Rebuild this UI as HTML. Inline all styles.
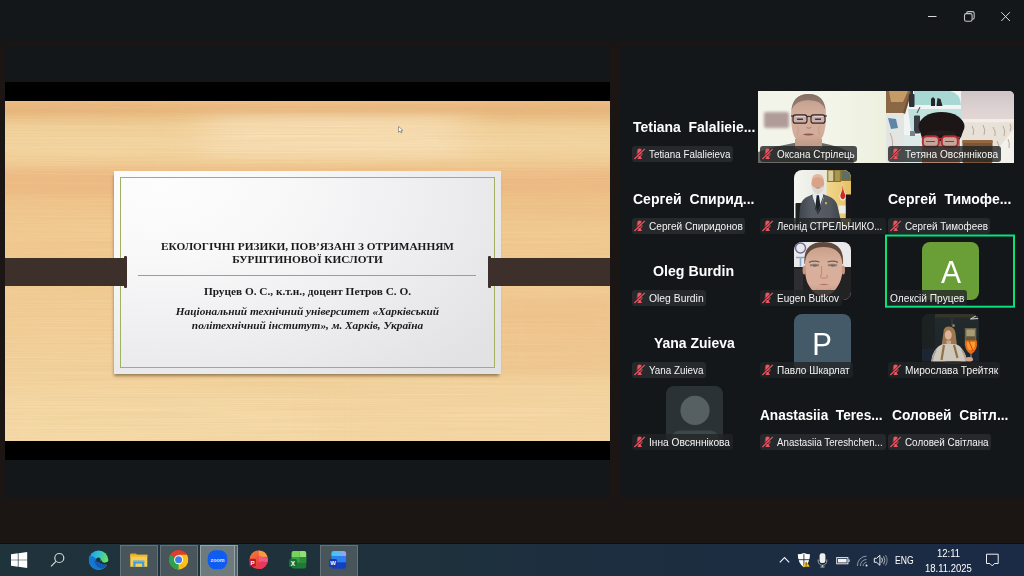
<!DOCTYPE html>
<html>
<head>
<meta charset="utf-8">
<style>
*{margin:0;padding:0;box-sizing:border-box}
html,body{width:1024px;height:576px;overflow:hidden;background:#1b1613;font-family:"Liberation Sans",sans-serif}
.abs{position:absolute}
#topbar{left:0;top:0;width:1024px;height:42px;background:#13171a}
#leftp{left:5px;top:45px;width:605px;height:453px;background:#13171a}
#rightp{left:619px;top:45px;width:405px;height:453px;background:#13171a}
#blk{left:5px;top:82px;width:605px;height:378px;background:#000}
#wood{left:5px;top:101px;width:605px;height:340px;overflow:hidden;background:#f2cc94}
.rib{background:#3d302a;height:28px;top:157px}
.cap{background:#3d302a;width:3px;height:32px;top:155px;border-radius:1px}
#paper{left:109px;top:70px;width:387px;height:203px;background:radial-gradient(ellipse 110% 120% at 12% 8%,#fdfdfd 0%,#f8f8f9 30%,#efeff1 60%,#e7e7e9 85%,#e2e2e4 100%);box-shadow:-1px 3px 3px -1px rgba(60,40,10,.5)}
#gb{left:6px;top:6px;width:375px;height:191px;border:1px solid #a0b162}
.st{font-family:"Liberation Serif",serif;color:#1a1a1a;text-align:center;white-space:nowrap;position:absolute;left:0;width:387px}
.tile{position:absolute;width:128px;height:72px}
.big{position:absolute;top:26px;height:20px;line-height:20px;color:#fff;font-weight:bold;font-size:14px;white-space:pre;transform-origin:0 50%}
.pill{position:absolute;left:2px;top:55px;height:16px;border-radius:3px;background:#25292c}
.pill.v{background:rgba(34,36,38,.80)}
.pill svg{position:absolute;left:1px;top:1px}
.pt{position:absolute;top:0.4px;height:16px;line-height:16px;color:#f4f4f4;font-size:10.7px;white-space:pre;transform-origin:0 50%}
.av{position:absolute;left:35.5px;top:7.4px;width:57.7px;height:57.7px;border-radius:8px;overflow:hidden}
.ltr{color:#fff;font-size:32px;line-height:58px;text-align:center;width:58px;position:absolute;left:0;top:0.5px}
#tb{left:0;top:543px;width:1024px;height:33px;background:linear-gradient(90deg,#1f333b 0%,#1e313c 40%,#1c2d41 70%,#1b2a45 100%);border-top:1px solid #0c0e10}
.tbb{position:absolute;top:1px;height:31px;width:38px;background:#48555a;border:1px solid #65727a;border-bottom:0}
.tray{color:#fff;position:absolute;white-space:pre;transform-origin:0 50%}
</style>
</head>
<body>
<div id="topbar" class="abs"></div>
<svg class="abs" style="left:920px;top:6px" width="100" height="22" viewBox="0 0 100 22">
  <path d="M8 10.5h8.5" stroke="#d8d8d8" stroke-width="1" fill="none"/>
  <rect x="46.6" y="5.6" width="7.6" height="7.6" rx="1.8" stroke="#c4c4c4" stroke-width="1.1" fill="none"/>
  <rect x="44.5" y="7.6" width="7.6" height="7.6" rx="1.8" stroke="#c4c4c4" stroke-width="1.1" fill="#13171a"/>
  <path d="M81.3 6.2l8.6 8.8M89.9 6.2l-8.6 8.8" stroke="#d8d8d8" stroke-width="1" fill="none"/>
</svg>
<div id="leftp" class="abs"></div>
<div id="rightp" class="abs"></div>
<div id="blk" class="abs"></div>
<div id="wood" class="abs">
  <svg class="abs" style="left:0;top:0" width="605" height="340" viewBox="0 0 605 340">
  <defs>
   <linearGradient id="wd" x1="0" y1="0" x2="0" y2="1">
    <stop offset="0" stop-color="#f2c38c"/><stop offset=".012" stop-color="#ecbc84"/><stop offset=".03" stop-color="#e9b980"/><stop offset=".048" stop-color="#ecc58c"/>
    <stop offset=".075" stop-color="#f3d29c"/><stop offset=".13" stop-color="#f5d7a4"/><stop offset=".19" stop-color="#f3cf98"/><stop offset=".24" stop-color="#f1c990"/>
    <stop offset=".30" stop-color="#f1c88f"/><stop offset=".38" stop-color="#f2cc94"/><stop offset=".46" stop-color="#f2cb92"/><stop offset=".55" stop-color="#f3ce96"/>
    <stop offset=".68" stop-color="#f3d09a"/><stop offset=".80" stop-color="#f4d49f"/><stop offset=".90" stop-color="#f5d8a5"/><stop offset="1" stop-color="#f5d9a7"/>
   </linearGradient>
   <filter id="wb" x="-20%" y="-20%" width="140%" height="140%"><feGaussianBlur stdDeviation="22 5"/></filter>
   <filter id="gr" x="0" y="0" width="100%" height="100%"><feTurbulence type="fractalNoise" baseFrequency="0.005 0.8" numOctaves="2" seed="7"/><feColorMatrix type="matrix" values="0 0 0 0 0.62  0 0 0 0 0.36  0 0 0 0 0.12  0.9 0.9 0 0 -0.62"/></filter>
  </defs>
  <rect width="605" height="340" fill="url(#wd)"/>
  <g filter="url(#wb)">
   <rect x="-60" y="67" width="730" height="28" fill="#eeb280" opacity=".5"/>
   <rect x="480" y="103" width="170" height="14" fill="#ecb07c" opacity=".22"/>
   <rect x="480" y="-5" width="160" height="26" fill="#e8b07a" opacity=".22"/>
   <rect x="-40" y="-5" width="170" height="16" fill="#e5ad76" opacity=".15"/>
   <rect x="470" y="195" width="170" height="80" fill="#ecb67e" opacity=".32"/>
   <rect x="200" y="14" width="260" height="42" fill="#fbe8c4" opacity=".55"/>
   <rect x="-30" y="290" width="330" height="55" fill="#f9e2b4" opacity=".28"/>
  </g>
  <rect width="605" height="340" filter="url(#gr)" opacity=".22"/>
  </svg>
  <div id="paper" class="abs">
    <div id="gb" class="abs"></div>
    <div class="st" id="t1" style="top:69px;font-weight:bold;font-size:11.3px;line-height:13.3px">ЕКОЛОГІЧНІ РИЗИКИ, ПОВ’ЯЗАНІ З ОТРИМАННЯМ<br>БУРШТИНОВОЇ КИСЛОТИ</div>
    <div class="abs" style="left:24px;top:104px;width:338px;height:1px;background:#9aab58"></div>
    <div class="st" id="t2" style="top:114.3px;font-weight:bold;font-size:11.3px;line-height:13px">Пруцев О. С., к.т.н., доцент Петров С. О.</div>
    <div class="st" id="t3" style="top:134px;font-weight:bold;font-style:italic;font-size:11.3px;line-height:13.7px">Національний технічний університет «Харківський<br>політехнічний інститут», м. Харків, Україна</div>
  </div>
  <div class="abs rib" style="left:0;width:121px"></div>
  <div class="abs cap" style="left:119px"></div>
  <div class="abs rib" style="left:484px;width:121px"></div>
  <div class="abs cap" style="left:483px"></div>
  <svg class="abs" style="left:393px;top:25px" width="6" height="8" viewBox="0 0 6 8"><path d="M0.5 0.3v6l1.5-1.3 1.1 2 .9-.5-1-1.9h1.9z" fill="#fff" stroke="#555" stroke-width=".55"/></svg>
</div>
<div class="tile" style="left:630px;top:91px"><div class="big" id="b0" style="left:2.90px;transform:scaleX(0.9968)">Tetiana  Falalieie...</div><div class="pill" style="left:2.0px;width:101.0px"><svg width="14" height="14" viewBox="0 0 14 14"><rect x="4.3" y="1.5" width="4.6" height="6.6" rx="2.3" fill="#f0545e"/><path d="M3.9 6.6a2.7 2.7 0 0 0 5.4 0" stroke="#f0545e" stroke-width="1" fill="none" opacity=".75"/><path d="M6.6 9v2.2" stroke="#f0545e" stroke-width="2.4" fill="none"/><path d="M4.7 11.3h3.9" stroke="#f0545e" stroke-width="1.4" fill="none"/><path d="M1.6 11.6L11.7 1.6" stroke="#25292c" stroke-width="2.2" opacity=".8"/><path d="M1.4 12L11.8 1.8" stroke="#f0545e" stroke-width="1.1"/></svg><div class="pt" id="p0" style="left:16.90px;transform:scaleX(0.9194)">Tetiana Falalieieva</div></div></div>
<div class="tile" style="left:758px;top:91px"><svg class="abs" style="left:0;top:0" width="128" height="72" viewBox="0 0 128 72">
<defs><filter id="bl1" x="-20%" y="-20%" width="140%" height="140%"><feGaussianBlur stdDeviation="1.6"/></filter><filter id="bl1s"><feGaussianBlur stdDeviation=".45"/></filter>
<linearGradient id="w1" x1="0" x2="1"><stop offset="0" stop-color="#f2f4ea"/><stop offset=".5" stop-color="#f3f5ea"/><stop offset="1" stop-color="#edf0de"/></linearGradient>
<linearGradient id="f1" x1="0" x2="0" y1="0" y2="1"><stop offset="0" stop-color="#9a8577"/><stop offset=".16" stop-color="#c7a492"/><stop offset=".35" stop-color="#d2ad9b"/><stop offset=".75" stop-color="#d4ae9c"/><stop offset="1" stop-color="#c19886"/></linearGradient></defs>
<rect width="128" height="72" fill="url(#w1)"/>
<rect x="6" y="21" width="25" height="16" rx="2" fill="#a08684" opacity=".8" filter="url(#bl1)"/>
<g filter="url(#bl1s)">
<path d="M0 72v-11q18-6 36-9h28q16 3 28 9l4 11z" fill="#696a66"/>
<path d="M37 48h27v9q-13 6-27 0z" fill="#c39c8a"/>
<path d="M33 24q0-21 17.500-21t17.500 21q0 14-3 21-5 10-14.500 10t-14.500-10q-3-7-3-21z" fill="url(#f1)"/>
<path d="M33.500 19q1-15.500 17-16 16 .5 17 16-4-10-17-10t-17 10z" fill="#7a675b" opacity=".7"/>
<rect x="35" y="23.800" width="14" height="8.400" rx="2.500" fill="#c9b0aa" stroke="#3a2422" stroke-width="1.150"/>
<rect x="53" y="23.800" width="14" height="8.400" rx="2.500" fill="#c9b0aa" stroke="#3a2422" stroke-width="1.150"/>
<path d="M33 25h3M49 26q2-1.500 4 0M66 25h3" stroke="#3a2422" stroke-width="1.150" fill="none"/>
<path d="M38 25.500h9M56 25.500h9" stroke="#dfe0ee" stroke-width="1.200" opacity=".7"/>
<path d="M44.500 43.300q6-1.800 12 0q-6 2.400-12 0z" fill="#8d5552"/><path d="M39 28.300h6M57 28.300h6" stroke="#4a3632" stroke-width="1.400"/>
<path d="M48.500 36.500q2.200 1.500 4.800 0" stroke="#a57c6c" stroke-width="1" fill="none"/>
<path d="M39 35q3 4 0 9M62 35q-3 4 0 9" stroke="#c49a8a" stroke-width="1.500" fill="none" opacity=".6"/>
</g>
</svg>
<div class="pill v" style="left:2.0px;width:97.3px"><svg width="14" height="14" viewBox="0 0 14 14"><rect x="4.3" y="1.5" width="4.6" height="6.6" rx="2.3" fill="#f0545e"/><path d="M3.9 6.6a2.7 2.7 0 0 0 5.4 0" stroke="#f0545e" stroke-width="1" fill="none" opacity=".75"/><path d="M6.6 9v2.2" stroke="#f0545e" stroke-width="2.4" fill="none"/><path d="M4.7 11.3h3.9" stroke="#f0545e" stroke-width="1.4" fill="none"/><path d="M1.6 11.6L11.7 1.6" stroke="#25292c" stroke-width="2.2" opacity=".8"/><path d="M1.4 12L11.8 1.8" stroke="#f0545e" stroke-width="1.1"/></svg><div class="pt" id="p1" style="left:16.90px;transform:scaleX(0.9248)">Оксана Стрілець</div></div></div>
<div class="tile" style="left:886px;top:91px"><svg class="abs" style="left:0;top:0;border-top-right-radius:5px" width="128" height="72" viewBox="0 0 128 72">
<defs><filter id="bl2"><feGaussianBlur stdDeviation=".6"/></filter>
<linearGradient id="wl2" x1="0" x2="0" y1="0" y2="1"><stop offset="0" stop-color="#cfc5c6"/><stop offset=".5" stop-color="#dbd0d0"/><stop offset="1" stop-color="#e4d8d6"/></linearGradient></defs>
<rect width="128" height="72" fill="#e6e1da"/>
<rect x="74" y="0" width="54" height="30" fill="url(#wl2)"/>
<rect x="74" y="28" width="54" height="3.500" fill="#f1eeea"/>
<rect x="74" y="31.500" width="54" height="41" fill="#e7e1d8"/><path d="M100 72l28-34v34z" fill="#f6f5f2" opacity=".8" filter="url(#bl2)"/>
<g stroke="#b49e8a" stroke-width="1" fill="none" opacity=".85"><path d="M86 35q3 4 1 9M97 34q3 5 1 10M107 36q3 4 2 9M117 35q3 5 1 10M91 50q3 4 1 9M111 50q3 4 1 9M122 48q2 4 1 9M124 33q2 3 0 7"/></g>
<g filter="url(#bl2)">
<rect x="17" y="0" width="58" height="60" fill="#f1f4f2"/>
<path d="M28 0h36q10 2 11 14h-47z" fill="#a8d8d4"/>
<path d="M22 18h53v22h-50z" fill="#bfe2de"/>
<path d="M17 44h40v28h-40z" fill="#dcebe8"/>
<rect x="0" y="22" width="18" height="50" fill="#e3e5e2"/>
<path d="M2 27l8 1 2 9-7 1z" fill="#5f86a8"/><path d="M4 42q4 8 2 20" stroke="#c0a8a0" stroke-width="1" fill="none"/>
<path d="M0 0h25l-7 22h-18z" fill="#8b6844"/>
<path d="M3 0h19l-5 11h-12z" fill="#c59b66"/>
<path d="M17 22l7-22 2 0-7 23z" fill="#6d4f30"/>
<rect x="23" y="3" width="5.500" height="13" rx="1" fill="#2d3137"/><rect x="24.500" y="0" width="2.500" height="4" fill="#2d3137"/>
<path d="M45 15v-7l2-2 2 2v7zM50.500 15l1-8 3 1 2 7z" fill="#26282c"/>
<path d="M31 22l3-6M28.500 25h5v17h-5z" stroke="#3b3d44" stroke-width="1" fill="#3b3d44"/>
<rect x="24" y="40" width="5" height="5" fill="#7a8288"/>
<rect x="76.500" y="49" width="30" height="23" rx="1.500" fill="#7c5538"/><rect x="76.500" y="49" width="30" height="3" fill="#94683f"/>
<path d="M36 72v-22q0-5 5-5h28q5 0 5 5v22z" fill="#b88a78"/>
<ellipse cx="55.500" cy="35.500" rx="23" ry="14.500" fill="#1c1719"/>
<path d="M33.500 37q1.500 10 4.500 12l3-7q14-4 29 0l3 7q3-3 4.500-12z" fill="#1a1618"/>
<path d="M41 41q14-4 28 0l1 3h-30z" fill="#221a1b"/>
<rect x="36.800" y="45.300" width="16" height="10.500" rx="4" fill="#c6a59b" stroke="#b42a32" stroke-width="1.900"/>
<rect x="55.800" y="45.300" width="16" height="10.500" rx="4" fill="#c6a59b" stroke="#b42a32" stroke-width="1.900"/>
<path d="M35.500 46.500h2M71.500 46.500h2.500M52.500 48q1.700-1 3.400 0" stroke="#b42a32" stroke-width="1.600" fill="none"/>
<path d="M40 50.500h9M59 50.500h9" stroke="#6a4a48" stroke-width="1.200"/>
<path d="M36 72v-6h36v6z" fill="#b08270"/>
</g>
</svg>
<div class="pill v" style="left:2.0px;width:113.0px"><svg width="14" height="14" viewBox="0 0 14 14"><rect x="4.3" y="1.5" width="4.6" height="6.6" rx="2.3" fill="#f0545e"/><path d="M3.9 6.6a2.7 2.7 0 0 0 5.4 0" stroke="#f0545e" stroke-width="1" fill="none" opacity=".75"/><path d="M6.6 9v2.2" stroke="#f0545e" stroke-width="2.4" fill="none"/><path d="M4.7 11.3h3.9" stroke="#f0545e" stroke-width="1.4" fill="none"/><path d="M1.6 11.6L11.7 1.6" stroke="#25292c" stroke-width="2.2" opacity=".8"/><path d="M1.4 12L11.8 1.8" stroke="#f0545e" stroke-width="1.1"/></svg><div class="pt" id="p2" style="left:16.90px;transform:scaleX(0.9458)">Тетяна Овсяннікова</div></div></div>
<div class="tile" style="left:630px;top:163px"><div class="big" id="b3" style="left:3.00px;transform:scaleX(1.0013)">Сергей  Спирид...</div><div class="pill" style="left:2.0px;width:113.3px"><svg width="14" height="14" viewBox="0 0 14 14"><rect x="4.3" y="1.5" width="4.6" height="6.6" rx="2.3" fill="#f0545e"/><path d="M3.9 6.6a2.7 2.7 0 0 0 5.4 0" stroke="#f0545e" stroke-width="1" fill="none" opacity=".75"/><path d="M6.6 9v2.2" stroke="#f0545e" stroke-width="2.4" fill="none"/><path d="M4.7 11.3h3.9" stroke="#f0545e" stroke-width="1.4" fill="none"/><path d="M1.6 11.6L11.7 1.6" stroke="#25292c" stroke-width="2.2" opacity=".8"/><path d="M1.4 12L11.8 1.8" stroke="#f0545e" stroke-width="1.1"/></svg><div class="pt" id="p3" style="left:16.90px;transform:scaleX(0.9451)">Сергей Спиридонов</div></div></div>
<div class="tile" style="left:758px;top:163px"><div class="av"><svg width="58" height="58" viewBox="0 0 58 58">
<defs><filter id="bl3"><feGaussianBlur stdDeviation=".5"/></filter>
<linearGradient id="bd3" x1="0" x2="1"><stop offset="0" stop-color="#f6f6f1"/><stop offset=".5" stop-color="#e6e8e0"/><stop offset="1" stop-color="#eeeee8"/></linearGradient>
<linearGradient id="su3" x1="0" x2="1"><stop offset="0" stop-color="#3f444b"/><stop offset=".3" stop-color="#585d65"/><stop offset=".7" stop-color="#535860"/><stop offset="1" stop-color="#3d4249"/></linearGradient>
<linearGradient id="yl3" x1="0" x2="1"><stop offset="0" stop-color="#f0d88e"/><stop offset="1" stop-color="#e4bf62"/></linearGradient></defs>
<rect width="58" height="58" fill="url(#bd3)"/>
<rect x="32.500" y="0" width="26" height="58" fill="url(#yl3)"/>
<g filter="url(#bl3)">
<rect x="33.800" y="0" width="5.900" height="11.500" fill="#d6cca0" stroke="#86702c" stroke-width="1"/>
<rect x="40.500" y="0" width="5.900" height="11.500" fill="#a89654" stroke="#86702c" stroke-width="1"/>
<rect x="47.600" y="0" width="9.400" height="10.500" fill="#5e6e62" stroke="#86702c" stroke-width="1"/>
<path d="M48.800 13.300l.8 6 2.400 5.500q.8 5-3.200 6-4-1-3.200-6l2.400-5.500z" fill="#f2ece4"/>
<path d="M48.800 15l.6 5 1.800 5q.4 3.500-2.400 4.200-2.800-.7-2.400-4.200l1.800-5z" fill="#cc2a20"/>
<rect x="44.500" y="35.500" width="8" height="8" fill="#ecece8"/>
<rect x="51.800" y="24.500" width="6.500" height="24" fill="#15161a"/>
<rect x="1.500" y="33" width="6" height="25" rx="1" fill="#1b2024"/>
<path d="M4.500 58l1.500-21q1-8 9-11l6-2.500h6l7 2.500q8 3 9.500 10l5 22z" fill="url(#su3)"/>
<path d="M19.500 22l4.200 1.500 4.200-1.500 2 5.500-6 15-6-15z" fill="#e6ebf0"/>
<path d="M22.700 25.200h2.200l2 13.500-3 5.500-2.800-5.500z" fill="#1c2026"/>
<path d="M17.500 25l6 17.500M30 25l-6 17.500" stroke="#42474e" stroke-width="1" fill="none"/>
<ellipse cx="23.800" cy="13.400" rx="6.400" ry="8.800" fill="#d9a38a"/>
<path d="M17.500 10q1-6 6.300-6t6.300 6q-3-3-6.300-3t-6.300 3z" fill="#e4b8a0"/>
<path d="M17.800 15q.3 8.500 6 9 5.700-.5 6-9-2.500 3.300-6 3.300t-6-3.300z" fill="#dcd8d4"/>
<path d="M21.500 17.800q2.300 1 4.600 0" stroke="#b88474" stroke-width=".8" fill="none"/>
<rect x="31" y="32" width="2" height="2.200" fill="#c8b040"/>
</g></svg></div>
<div class="pill v" style="left:2.0px;width:126.0px"><svg width="14" height="14" viewBox="0 0 14 14"><rect x="4.3" y="1.5" width="4.6" height="6.6" rx="2.3" fill="#f0545e"/><path d="M3.9 6.6a2.7 2.7 0 0 0 5.4 0" stroke="#f0545e" stroke-width="1" fill="none" opacity=".75"/><path d="M6.6 9v2.2" stroke="#f0545e" stroke-width="2.4" fill="none"/><path d="M4.7 11.3h3.9" stroke="#f0545e" stroke-width="1.4" fill="none"/><path d="M1.6 11.6L11.7 1.6" stroke="#25292c" stroke-width="2.2" opacity=".8"/><path d="M1.4 12L11.8 1.8" stroke="#f0545e" stroke-width="1.1"/></svg><div class="pt" id="p4" style="left:16.90px;transform:scaleX(0.8969)">Леонід СТРЕЛЬНИКО...</div></div></div>
<div class="tile" style="left:886px;top:163px"><div class="big" id="b5" style="left:2.15px;transform:scaleX(1.0002)">Сергей  Тимофе...</div><div class="pill" style="left:2.0px;width:101.7px"><svg width="14" height="14" viewBox="0 0 14 14"><rect x="4.3" y="1.5" width="4.6" height="6.6" rx="2.3" fill="#f0545e"/><path d="M3.9 6.6a2.7 2.7 0 0 0 5.4 0" stroke="#f0545e" stroke-width="1" fill="none" opacity=".75"/><path d="M6.6 9v2.2" stroke="#f0545e" stroke-width="2.4" fill="none"/><path d="M4.7 11.3h3.9" stroke="#f0545e" stroke-width="1.4" fill="none"/><path d="M1.6 11.6L11.7 1.6" stroke="#25292c" stroke-width="2.2" opacity=".8"/><path d="M1.4 12L11.8 1.8" stroke="#f0545e" stroke-width="1.1"/></svg><div class="pt" id="p5" style="left:16.90px;transform:scaleX(0.9227)">Сергей Тимофеев</div></div></div>
<div class="tile" style="left:630px;top:235px"><div class="big" id="b6" style="left:23.30px;transform:scaleX(1.0122)">Oleg Burdin</div><div class="pill" style="left:2.0px;width:74.0px"><svg width="14" height="14" viewBox="0 0 14 14"><rect x="4.3" y="1.5" width="4.6" height="6.6" rx="2.3" fill="#f0545e"/><path d="M3.9 6.6a2.7 2.7 0 0 0 5.4 0" stroke="#f0545e" stroke-width="1" fill="none" opacity=".75"/><path d="M6.6 9v2.2" stroke="#f0545e" stroke-width="2.4" fill="none"/><path d="M4.7 11.3h3.9" stroke="#f0545e" stroke-width="1.4" fill="none"/><path d="M1.6 11.6L11.7 1.6" stroke="#25292c" stroke-width="2.2" opacity=".8"/><path d="M1.4 12L11.8 1.8" stroke="#f0545e" stroke-width="1.1"/></svg><div class="pt" id="p6" style="left:16.90px;transform:scaleX(0.9689)">Oleg Burdin</div></div></div>
<div class="tile" style="left:758px;top:235px"><div class="av"><svg width="58" height="58" viewBox="0 0 58 58">
<defs><filter id="bl4"><feGaussianBlur stdDeviation=".7"/></filter>
<linearGradient id="f4" x1="0" x2="0" y1="0" y2="1"><stop offset="0" stop-color="#c9a08a"/><stop offset=".3" stop-color="#d7b09b"/><stop offset=".75" stop-color="#d9ae9a"/><stop offset="1" stop-color="#c39680"/></linearGradient></defs>
<rect width="58" height="58" fill="#e9e9ea"/>
<g filter="url(#bl4)">
<circle cx="6.500" cy="6" r="5" fill="none" stroke="#6a6a9e" stroke-width="1.400"/>
<path d="M2 15.500h9M6.500 15.500v9" stroke="#8aa4cc" stroke-width="1.600"/>
<path d="M0 58v-33h12q17-4 34 0h12v33z" fill="#222224"/>
<path d="M0 27h9v31h-9z" fill="#2e2e30"/>
<path d="M10.500 22q-2-22 19-22t19.500 22z" fill="#5e4a3c"/>
<path d="M11 26q-1.500-21 18.500-21t19 21q0 9-3 15-3.500 7-8 10.500-3.500 3-8 3t-8-3q-4.500-3.500-8-10.500-2.500-6-2.500-15z" fill="url(#f4)"/>
<ellipse cx="10.300" cy="28" rx="1.700" ry="4.500" fill="#c9977f"/><ellipse cx="49.300" cy="28" rx="1.700" ry="4.500" fill="#c9977f"/>
<path d="M15 20.300q5-2.200 10.500-.3M33.500 20q5.500-1.900 10.500.3" stroke="#7a5c4c" stroke-width="1.300" fill="none"/>
<path d="M16 23.500q4.500-1.500 9 0M34 23.500q4.500-1.500 9 0" stroke="#8e6c5e" stroke-width="2.200" fill="none" opacity=".8"/>
<ellipse cx="20.800" cy="23.800" rx="2.300" ry="1" fill="#5a7088"/><ellipse cx="38.800" cy="23.800" rx="2.300" ry="1" fill="#5a7088"/>
<path d="M27.500 24v9q-2 2 0 2.800 2.500 1 5 0 2-.8 0-2.800" stroke="#c08e7a" stroke-width="1.100" fill="none"/>
<path d="M24.500 42.300q5.500-1.300 11 0q-5.500 1.800-11 0z" fill="#b87870"/>
<path d="M22 47q7.500 3 15 0" stroke="#c79a86" stroke-width="1.500" fill="none" opacity=".7"/>
</g></svg></div>
<div class="pill v" style="left:2.0px;width:81.7px"><svg width="14" height="14" viewBox="0 0 14 14"><rect x="4.3" y="1.5" width="4.6" height="6.6" rx="2.3" fill="#f0545e"/><path d="M3.9 6.6a2.7 2.7 0 0 0 5.4 0" stroke="#f0545e" stroke-width="1" fill="none" opacity=".75"/><path d="M6.6 9v2.2" stroke="#f0545e" stroke-width="2.4" fill="none"/><path d="M4.7 11.3h3.9" stroke="#f0545e" stroke-width="1.4" fill="none"/><path d="M1.6 11.6L11.7 1.6" stroke="#25292c" stroke-width="2.2" opacity=".8"/><path d="M1.4 12L11.8 1.8" stroke="#f0545e" stroke-width="1.1"/></svg><div class="pt" id="p7" style="left:16.90px;transform:scaleX(0.9317)">Eugen Butkov</div></div></div>
<div class="tile" style="left:886px;top:235px"><div class="av" style="background:#6a9f38"><div class="ltr" style="transform:scaleX(.94)">A</div></div>
<div class="pill v" style="left:2.0px;width:79.2px"><div class="pt" id="p8" style="left:2.40px;transform:scaleX(0.9513)">Олексій Пруцев</div></div></div>
<div class="tile" style="left:630px;top:307px"><div class="big" id="b9" style="left:23.70px;transform:scaleX(0.9971)">Yana Zuieva</div><div class="pill" style="left:2.0px;width:74.0px"><svg width="14" height="14" viewBox="0 0 14 14"><rect x="4.3" y="1.5" width="4.6" height="6.6" rx="2.3" fill="#f0545e"/><path d="M3.9 6.6a2.7 2.7 0 0 0 5.4 0" stroke="#f0545e" stroke-width="1" fill="none" opacity=".75"/><path d="M6.6 9v2.2" stroke="#f0545e" stroke-width="2.4" fill="none"/><path d="M4.7 11.3h3.9" stroke="#f0545e" stroke-width="1.4" fill="none"/><path d="M1.6 11.6L11.7 1.6" stroke="#25292c" stroke-width="2.2" opacity=".8"/><path d="M1.4 12L11.8 1.8" stroke="#f0545e" stroke-width="1.1"/></svg><div class="pt" id="p9" style="left:16.90px;transform:scaleX(0.9195)">Yana Zuieva</div></div></div>
<div class="tile" style="left:758px;top:307px"><div class="av" style="background:#455a68"><div class="ltr" style="transform:scaleX(.92);left:-0.8px">P</div></div>
<div class="pill v" style="left:2.0px;width:92.6px"><svg width="14" height="14" viewBox="0 0 14 14"><rect x="4.3" y="1.5" width="4.6" height="6.6" rx="2.3" fill="#f0545e"/><path d="M3.9 6.6a2.7 2.7 0 0 0 5.4 0" stroke="#f0545e" stroke-width="1" fill="none" opacity=".75"/><path d="M6.6 9v2.2" stroke="#f0545e" stroke-width="2.4" fill="none"/><path d="M4.7 11.3h3.9" stroke="#f0545e" stroke-width="1.4" fill="none"/><path d="M1.6 11.6L11.7 1.6" stroke="#25292c" stroke-width="2.2" opacity=".8"/><path d="M1.4 12L11.8 1.8" stroke="#f0545e" stroke-width="1.1"/></svg><div class="pt" id="p10" style="left:16.90px;transform:scaleX(0.9392)">Павло Шкарлат</div></div></div>
<div class="tile" style="left:886px;top:307px"><div class="av"><svg width="58" height="58" viewBox="0 0 58 58">
<defs><filter id="bl5"><feGaussianBlur stdDeviation=".7"/></filter>
<linearGradient id="bg5" x1="0" x2="0" y1="0" y2="1"><stop offset="0" stop-color="#2a2b27"/><stop offset=".1" stop-color="#222a2d"/><stop offset=".7" stop-color="#1d2529"/><stop offset="1" stop-color="#1b1d1f"/></linearGradient></defs>
<rect width="58" height="58" fill="url(#bg5)"/>
<g filter="url(#bl5)">
<rect x="0" y="0" width="13" height="40" fill="#1a2024"/>
<rect x="13" y="0" width="45" height="3.500" fill="#36342b"/>
<path d="M48.500 5l6-3.500 2.500 3z" fill="none" stroke="#d8d8d2" stroke-width="1"/>
<rect x="42.800" y="14" width="11.500" height="17" fill="#6e6548"/><rect x="44.300" y="15.500" width="8.500" height="7" fill="#a89c74"/><rect x="44.300" y="22.500" width="8.500" height="7" fill="#62563a"/>
<path d="M30 5v7" stroke="#4a4c46" stroke-width=".8"/><circle cx="31.500" cy="11.500" r="1.500" fill="#7e7a64"/>
<rect x="0" y="35" width="58" height="12" fill="#1a2632"/>
<path d="M21.500 18q0-5.500 5.500-5.500t6.500 6.500l1.500 13 2.500 12h-6l-2-14h-5l-1.500 14h-6l2.500-12z" fill="#9c7850"/>
<ellipse cx="26.300" cy="21" rx="3.500" ry="4.700" fill="#dfb49c"/>
<path d="M24.500 26.500h4.500v4h-4.500z" fill="#cfa48c"/>
<path d="M9 49q1-10 5-14 4-5 9-5h8q6 0 9 5 4 5 5 12l-4 2z" fill="#cfc8bc"/>
<path d="M14 36q-3 5-4 12M40 36q3 5 4 11" stroke="#a8a094" stroke-width="1.500" fill="none"/>
<path d="M22 31l-2.500 15M32 31l3.500 13" stroke="#94704a" stroke-width="2.200"/>
<path d="M43.300 26.500h11.400q1.800 9-5.700 14-7.500-5-5.700-14z" fill="#ee6a12"/><path d="M45 28h8q.5 5-2 8h-4q-2.500-3-2-8z" fill="#ff9a2e"/><path d="M47 27l4 10" stroke="#c8440c" stroke-width="1"/>
<path d="M49 40.500v5" stroke="#c8c0b0" stroke-width=".8"/>
<ellipse cx="47" cy="45.500" rx="4" ry="2.400" fill="#d4a48c"/>
<rect x="0" y="47.500" width="58" height="11" fill="#191919"/>
<ellipse cx="31" cy="48.500" rx="9" ry="1.600" fill="#4e4832"/>
</g></svg></div>
<div class="pill v" style="left:2.0px;width:112.3px"><svg width="14" height="14" viewBox="0 0 14 14"><rect x="4.3" y="1.5" width="4.6" height="6.6" rx="2.3" fill="#f0545e"/><path d="M3.9 6.6a2.7 2.7 0 0 0 5.4 0" stroke="#f0545e" stroke-width="1" fill="none" opacity=".75"/><path d="M6.6 9v2.2" stroke="#f0545e" stroke-width="2.4" fill="none"/><path d="M4.7 11.3h3.9" stroke="#f0545e" stroke-width="1.4" fill="none"/><path d="M1.6 11.6L11.7 1.6" stroke="#25292c" stroke-width="2.2" opacity=".8"/><path d="M1.4 12L11.8 1.8" stroke="#f0545e" stroke-width="1.1"/></svg><div class="pt" id="p11" style="left:16.90px;transform:scaleX(0.9509)">Мирослава Трейтяк</div></div></div>
<div class="tile" style="left:630px;top:379px"><div class="av" style="background:#2a3235"><svg width="58" height="58" viewBox="0 0 58 58"><circle cx="29" cy="24.4" r="14.6" fill="#565f62"/><path d="M4.5 58v-4a9.5 9.5 0 0 1 9.5-9.5h30a9.5 9.5 0 0 1 9.5 9.5v4z" fill="#3d4649"/></svg></div>
<div class="pill v" style="left:2.0px;width:101.0px"><svg width="14" height="14" viewBox="0 0 14 14"><rect x="4.3" y="1.5" width="4.6" height="6.6" rx="2.3" fill="#f0545e"/><path d="M3.9 6.6a2.7 2.7 0 0 0 5.4 0" stroke="#f0545e" stroke-width="1" fill="none" opacity=".75"/><path d="M6.6 9v2.2" stroke="#f0545e" stroke-width="2.4" fill="none"/><path d="M4.7 11.3h3.9" stroke="#f0545e" stroke-width="1.4" fill="none"/><path d="M1.6 11.6L11.7 1.6" stroke="#25292c" stroke-width="2.2" opacity=".8"/><path d="M1.4 12L11.8 1.8" stroke="#f0545e" stroke-width="1.1"/></svg><div class="pt" id="p12" style="left:16.90px;transform:scaleX(0.9517)">Інна Овсяннікова</div></div></div>
<div class="tile" style="left:758px;top:379px"><div class="big" id="b13" style="left:2.40px;transform:scaleX(0.9745)">Anastasiia  Teres...</div><div class="pill" style="left:2.0px;width:126.0px"><svg width="14" height="14" viewBox="0 0 14 14"><rect x="4.3" y="1.5" width="4.6" height="6.6" rx="2.3" fill="#f0545e"/><path d="M3.9 6.6a2.7 2.7 0 0 0 5.4 0" stroke="#f0545e" stroke-width="1" fill="none" opacity=".75"/><path d="M6.6 9v2.2" stroke="#f0545e" stroke-width="2.4" fill="none"/><path d="M4.7 11.3h3.9" stroke="#f0545e" stroke-width="1.4" fill="none"/><path d="M1.6 11.6L11.7 1.6" stroke="#25292c" stroke-width="2.2" opacity=".8"/><path d="M1.4 12L11.8 1.8" stroke="#f0545e" stroke-width="1.1"/></svg><div class="pt" id="p13" style="left:16.90px;transform:scaleX(0.9092)">Anastasiia Tereshchen...</div></div></div>
<div class="tile" style="left:886px;top:379px"><div class="big" id="b14" style="left:5.80px;transform:scaleX(0.9863)">Соловей  Світл...</div><div class="pill" style="left:2.0px;width:103.0px"><svg width="14" height="14" viewBox="0 0 14 14"><rect x="4.3" y="1.5" width="4.6" height="6.6" rx="2.3" fill="#f0545e"/><path d="M3.9 6.6a2.7 2.7 0 0 0 5.4 0" stroke="#f0545e" stroke-width="1" fill="none" opacity=".75"/><path d="M6.6 9v2.2" stroke="#f0545e" stroke-width="2.4" fill="none"/><path d="M4.7 11.3h3.9" stroke="#f0545e" stroke-width="1.4" fill="none"/><path d="M1.6 11.6L11.7 1.6" stroke="#25292c" stroke-width="2.2" opacity=".8"/><path d="M1.4 12L11.8 1.8" stroke="#f0545e" stroke-width="1.1"/></svg><div class="pt" id="p14" style="left:16.90px;transform:scaleX(0.9225)">Соловей Світлана</div></div></div>
<svg class="abs" style="left:880px;top:230px" width="140" height="82" viewBox="0 0 140 82"><rect x="6" y="5.5" width="128" height="71.2" fill="none" stroke="#08e27c" stroke-width="2"/></svg>
<div id="tb" class="abs">
<div class="tbb" style="left:120px"></div>
<div class="tbb" style="left:160px"></div>
<div class="tbb" style="left:200px;width:35px;background:#6e7b7e;border-color:#98a4a6"></div>
<div class="abs" style="left:235px;top:1px;width:3px;height:31px;background:#56646a;border-right:1px solid #8a9699;border-top:1px solid #8a9699"></div>
<div class="tbb" style="left:320px"></div>
<svg class="abs" style="left:0;top:0" width="420" height="32" viewBox="0 0 420 32">
<defs>
<linearGradient id="eg" x1="0" y1="0.2" x2="1" y2="0.5"><stop offset="0" stop-color="#1e9be6"/><stop offset=".4" stop-color="#2cbcd8"/><stop offset=".75" stop-color="#4fd58a"/><stop offset="1" stop-color="#74e650"/></linearGradient>
<linearGradient id="pg" x1="0" y1="0" x2="1" y2="1"><stop offset="0" stop-color="#f7873a"/><stop offset=".5" stop-color="#ee4b3c"/><stop offset="1" stop-color="#c8283a"/></linearGradient>
<linearGradient id="xg" x1="0" y1="0" x2="1" y2="1"><stop offset="0" stop-color="#52c24a"/><stop offset="1" stop-color="#137a3c"/></linearGradient>
<linearGradient id="wg" x1="0" y1="0" x2="0" y2="1"><stop offset="0" stop-color="#4fd1ee"/><stop offset=".45" stop-color="#2a8cf0"/><stop offset="1" stop-color="#1a3fc8"/></linearGradient>
</defs>
<!-- windows logo -->
<g fill="#fff"><path d="M11 10.200l6.800-.95v6.400h-6.800z"/><path d="M18.500 9.150l8.700-1.250v7.750h-8.700z"/><path d="M11 16.350h6.800v6.400l-6.800-.95z"/><path d="M18.500 16.350h8.700v7.750l-8.700-1.250z"/></g>
<!-- search -->
<circle cx="59.300" cy="14" r="4.500" fill="none" stroke="#d6d6d6" stroke-width="1.200"/><path d="M56 17.400l-5 5" stroke="#d6d6d6" stroke-width="1.300"/>
<!-- edge -->
<g transform="translate(98.6 16.1)">
<circle r="9.700" fill="url(#eg)"/>
<path d="M-9.700 0a9.700 9.700 0 0 0 18 5l-6.500-1.800q-4.500-.5-5-4.500-1.500-3.500-6.500-2.600z" fill="#1478d2"/>
<path d="M-9.600-1.300q6-2.500 8.600 1.300l-1.500 3-5 2.500z" fill="#1478d2"/>
<path d="M-4.300 1.200q1.800 7.500 8.800 7.300 2.800-.8 3.900-3.300l-5.900-1.800-4.500-4.500z" fill="#1458b0"/>
<circle cx="-.2" cy="-.4" r="2.300" fill="#1c3038"/>
<path d="M.2 1.600q1.500 2.600 8.600 3.200l1.500 1.500v-5.300l-2 1q-4.500 1.800-5.500-1.800z" fill="#1c3038"/>
</g>
<!-- explorer -->
<path d="M130.300 9.500h5.500l1.500 1.500h-7z" fill="#e0a31c"/><path d="M130.300 10.800h17v12h-17z" fill="#f9cd50"/><path d="M130.300 10.800h17v2h-17z" fill="#f3b92e"/>
<path d="M133.300 16.700h11v6.100h-11z" fill="#3b97de"/><path d="M135.500 19.500h6.600v3.300h-6.600z" fill="#f9cd50"/><path d="M133.300 16.700h11v1.400h-11z" fill="#62b5f0"/>
<!-- chrome -->
<circle cx="178.600" cy="15.700" r="9.700" fill="#e33b2e"/>
<path d="M178.600 15.700l-8.400-4.850a9.700 9.700 0 0 0 3.550 13.250z" fill="#2ba24c"/>
<path d="M178.600 15.700v9.700a9.700 9.700 0 0 1-4.850-1.300z" fill="#2ba24c"/>
<path d="M178.600 15.700l4.850 8.400a9.700 9.700 0 0 0 3.550-13.250h-8.400z" fill="#fbc116"/>
<path d="M178.600 15.700l4.850 8.400a9.700 9.700 0 0 1-4.850 1.300l-4.200-1.200z" fill="#fbc116"/>
<path d="M178.600 25.400a9.700 9.700 0 0 1-4.850-1.300l4.850-8.400z" fill="#2ba24c"/>
<circle cx="178.600" cy="15.700" r="4.500" fill="#fff"/><circle cx="178.600" cy="15.700" r="3.500" fill="#3f7ee8"/>
<!-- zoom -->
<rect x="207.700" y="6.300" width="19.600" height="19" rx="7.700" fill="#0e5cf2"/>
<text x="217.500" y="17.700" font-family="Liberation Sans" font-weight="bold" font-size="5.400" fill="#dfe8ff" text-anchor="middle">zoom</text>
<!-- powerpoint -->
<circle cx="258.700" cy="15.800" r="9.300" fill="url(#pg)"/>
<path d="M258.700 6.500a9.300 9.300 0 0 1 8.800 6.300q-4 1-8.800-.8z" fill="#f99a3c"/>
<path d="M259 12q5 2.500 8.700 1.200.6 2.800-.2 5.200-5-1.500-8.500-.5z" fill="#ee5a92" opacity=".9"/>
<path d="M257 19q5-2 10.300-.3-1.500 5-7 6.300-3-1-3.300-6z" fill="#e63a5c" opacity=".9"/>
<rect x="249.300" y="14.700" width="6.700" height="7.700" rx="1.400" fill="#be1a2a"/>
<text x="252.650" y="20.900" font-family="Liberation Sans" font-weight="bold" font-size="6.200" fill="#fff" text-anchor="middle">P</text>
<!-- excel -->
<rect x="291.600" y="7" width="14.600" height="17.600" rx="2" fill="#1c7c34"/>
<path d="M293.600 7h5.900v6h-7.900v-4q0-2 2-2z" fill="#74d45c"/>
<path d="M299.500 7h4.700q2 0 2 2v4h-6.700z" fill="#90e070"/>
<rect x="291.600" y="13" width="14.600" height="5.500" fill="#38a044"/>
<rect x="299.500" y="13" width="6.700" height="5.500" fill="#2c8c3c"/>
<rect x="289" y="15" width="8" height="8" rx="1.500" fill="#14703a"/>
<text x="293" y="21.500" font-family="Liberation Sans" font-weight="bold" font-size="6.400" fill="#fff" text-anchor="middle">X</text>
<!-- word -->
<defs><linearGradient id="wt" x1="0" x2="1"><stop offset="0" stop-color="#3cc4f8"/><stop offset=".6" stop-color="#62b8f6"/><stop offset="1" stop-color="#b494f0"/></linearGradient></defs>
<rect x="331.400" y="7" width="14.700" height="17.700" rx="2.200" fill="#1240c0"/>
<path d="M333.600 7h10.300q2.200 0 2.200 2.200v3.300h-14.700v-3.300q0-2.200 2.200-2.200z" fill="url(#wt)"/>
<rect x="331.400" y="12.500" width="14.700" height="5.800" fill="#2a82f0"/>
<rect x="329" y="15.100" width="8.100" height="7.900" rx="1.500" fill="#1838b0"/>
<text x="333.050" y="21.400" font-family="Liberation Sans" font-weight="bold" font-size="6" fill="#fff" text-anchor="middle">W</text>
</svg>
<svg class="abs" style="left:770px;top:0" width="254" height="32" viewBox="0 0 254 32">
<!-- chevron -->
<path d="M9.800 18.400l4.700-4.700 4.700 4.700" fill="none" stroke="#f0f0f0" stroke-width="1.200"/>
<!-- shield -->
<path d="M33.800 9.200q3 0 6.100-1.200 0 0 0 0 3.100 1.200 6.100 1.200 0 9-6.100 13-6.100-4-6.100-13z" fill="#fff" transform="translate(-6 1) scale(1)"/>
<path d="M33.900 10.200v12M27.800 15.700h12" stroke="#1c2b42" stroke-width=".9"/>
<path d="M36.200 16.800l3.600 6h-7.200z" fill="#f5c218"/><path d="M36.200 18.600v2.300M36.200 21.500v.8" stroke="#222" stroke-width=".8"/>
<!-- mic -->
<rect x="49.600" y="9.300" width="5.800" height="9.800" rx="2.300" fill="#f0f0f0"/><path d="M48.200 15.500v1.500a4.300 4.300 0 0 0 8.600 0v-1.500" fill="none" stroke="#9aa3ae" stroke-width="1"/><path d="M52.500 21v2M50.500 23h4" stroke="#b8c0c8" stroke-width="1"/>
<!-- battery -->
<rect x="66.700" y="13.600" width="11.200" height="6.200" fill="none" stroke="#e8e8e8" stroke-width="1"/><rect x="68" y="14.900" width="8.600" height="3.600" fill="#f4f4f4"/><rect x="78.400" y="15.400" width="1.200" height="2.600" fill="#e8e8e8"/>
<!-- wifi -->
<g fill="none" stroke="#8f99a6" stroke-width="1"><path d="M87.500 22a9 9 0 0 1 9-9.800"/><path d="M90.500 22a6 6 0 0 1 6-6.500"/><path d="M93.200 22a3.300 3.300 0 0 1 3.300-3.600"/></g><circle cx="96.500" cy="21.500" r="1" fill="#f0f0f0"/>
<!-- volume -->
<path d="M104.300 14.300h2.300l3.300-3v10l-3.300-3h-2.300z" fill="none" stroke="#f0f0f0" stroke-width="1"/><path d="M111.700 13.800q1.500 2.400 0 4.800" fill="none" stroke="#f0f0f0" stroke-width=".9"/><path d="M113.600 12.300q2.500 4 0 8" fill="none" stroke="#b8c0c8" stroke-width=".9"/><path d="M115.500 11q3.300 5.300 0 10.600" fill="none" stroke="#8f99a6" stroke-width=".9"/>
<!-- notif -->
<path d="M216.500 10.200h11.700v9.300h-3.700l-2.300 2.400-2.300-2.400h-3.400z" fill="none" stroke="#f0f0f0" stroke-width="1"/>
</svg>
<div class="tray" id="tr1" style="left:895.3px;top:8.8px;font-size:10.6px;line-height:14px;transform:scaleX(.81)">ENG</div>
<div class="tray" id="tr2" style="left:936.6px;top:3.1px;font-size:9.7px;line-height:14px;transform:scale(.985,1.04)">12:11</div>
<div class="tray" id="tr3" style="left:924.9px;top:17.7px;font-size:9.7px;line-height:14px;transform:scale(.98,1.04)">18.11.2025</div>
</div>

</body>
</html>
